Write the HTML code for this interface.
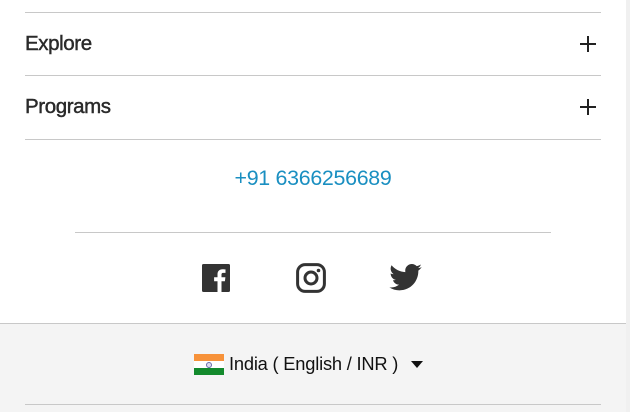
<!DOCTYPE html>
<html><head><meta charset="utf-8"><style>
*{margin:0;padding:0;box-sizing:border-box}
body{width:630px;height:412px;overflow:hidden;background:#fff;font-family:"Liberation Sans",Arial,sans-serif;position:relative}
.a{position:absolute}
.hl{position:absolute;height:1px;background:#c8c8c8}
.t{position:absolute;left:25px;font-size:20.5px;color:#2a2a2a;letter-spacing:-0.4px;-webkit-text-stroke:0.45px #2a2a2a}
.plus{position:absolute;left:580px;width:16px;height:16px}
.plus:before{content:"";position:absolute;left:0;top:7.3px;width:16px;height:1.4px;background:#222}
.plus:after{content:"";position:absolute;left:7.3px;top:0;width:1.4px;height:16px;background:#222}
</style></head><body>
<div class="hl" style="left:25px;top:12px;width:576px"></div>
<div class="t" style="top:32px">Explore</div>
<div class="plus" style="top:36px"></div>
<div class="hl" style="left:25px;top:75px;width:576px"></div>
<div class="t" style="top:95px">Programs</div>
<div class="plus" style="top:99px"></div>
<div class="hl" style="left:25px;top:139px;width:576px"></div>
<div class="a" style="left:0;width:626px;top:166px;text-align:center;font-size:21.4px;letter-spacing:-0.3px;color:#1a8fc1">+91 6366256689</div>
<div class="hl" style="left:75px;top:232px;width:476px"></div>
<svg class="a" style="left:202px;top:264px" width="28" height="28" viewBox="0 0 28 28"><rect width="28" height="28" rx="1.5" fill="#333"/><path d="M19.5 28V17.3h3.4l.5-4h-3.9v-2.5c0-1.1.3-1.9 1.9-1.9h2.1V5.4c-.4 0-1.6-.2-3-.2-3 0-5 1.8-5 5.1v3h-3.4v4h3.4V28z" fill="#fff"/></svg>
<svg class="a" style="left:296px;top:263px" width="30" height="30" viewBox="0 0 30 30"><rect x="1.6" y="1.6" width="26.8" height="26.8" rx="7.5" fill="none" stroke="#333" stroke-width="3"/><circle cx="15" cy="15" r="6" fill="none" stroke="#333" stroke-width="3"/><circle cx="22.5" cy="7.5" r="1.8" fill="#333"/></svg>
<svg class="a" style="left:389px;top:264px" width="33" height="27" viewBox="0 0 24 20"><path d="M24 2.3c-.9.4-1.8.7-2.8.8 1-.6 1.8-1.6 2.2-2.7-1 .6-2 1-3.100 1.2C19.4.6 18.1 0 16.7 0c-2.7 0-4.9 2.2-4.9 4.9 0 .4 0 .8.1 1.1C7.8 5.8 4.2 3.9 1.7.9c-.4.7-.7 1.6-.7 2.500 0 1.7.9 3.2 2.2 4.1-.8 0-1.6-.2-2.2-.6v.1c0 2.4 1.7 4.4 3.9 4.8-.4.1-.8.2-1.3.2-.3 0-.6 0-.9-.1.6 2 2.4 3.4 4.6 3.4-1.7 1.3-3.8 2.1-6.1 2.1-.4 0-.8 0-1.200-.1 2.2 1.4 4.8 2.2 7.5 2.2 9.1 0 14-7.5 14-14v-.6c1-.7 1.8-1.6 2.5-2.6z" fill="#333"/></svg>
<div class="a" style="left:0;top:323px;width:626px;height:89px;background:#f4f4f4;border-top:1px solid #c8c8c8"></div>
<div class="hl" style="left:25px;top:404px;width:576px"></div>
<div class="a" style="left:194px;top:354px;width:30px;height:21px">
<div style="height:7px;background:#f7923a"></div><div style="height:7px;background:#fff;position:relative"><div style="position:absolute;left:12px;top:0.5px;width:6px;height:6px;border-radius:50%;border:1px solid #6a6aa8;background:#dcdcee"></div></div><div style="height:7px;background:#138a2c"></div></div>
<div class="a" style="left:229px;top:353px;font-size:18.3px;color:#111;letter-spacing:-0.2px">India ( English / INR )</div>
<div class="a" style="left:411px;top:361px;width:0;height:0;border-left:6px solid transparent;border-right:6px solid transparent;border-top:7px solid #111"></div>
<div class="a" style="left:626px;top:0;width:4px;height:412px;background:#f0f0f0"></div>
</body></html>
